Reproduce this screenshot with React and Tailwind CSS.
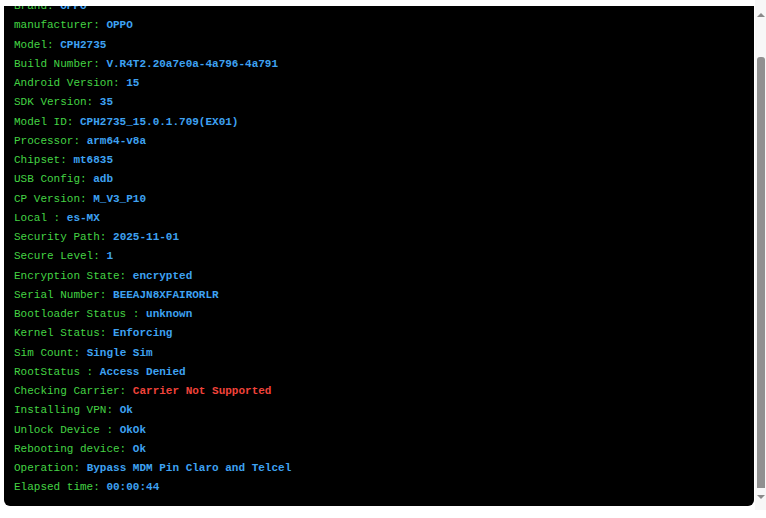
import React from 'react';

const lines = [
  ['Brand: ', 'OPPO'],
  ['manufacturer: ', 'OPPO'],
  ['Model: ', 'CPH2735'],
  ['Build Number: ', 'V.R4T2.20a7e0a-4a796-4a791'],
  ['Android Version: ', '15'],
  ['SDK Version: ', '35'],
  ['Model ID: ', 'CPH2735_15.0.1.709(EX01)'],
  ['Processor: ', 'arm64-v8a'],
  ['Chipset: ', 'mt6835'],
  ['USB Config: ', 'adb'],
  ['CP Version: ', 'M_V3_P10'],
  ['Local : ', 'es-MX'],
  ['Security Path: ', '2025-11-01'],
  ['Secure Level: ', '1'],
  ['Encryption State: ', 'encrypted'],
  ['Serial Number: ', 'BEEAJN8XFAIRORLR'],
  ['Bootloader Status : ', 'unknown'],
  ['Kernel Status: ', 'Enforcing'],
  ['Sim Count: ', 'Single Sim'],
  ['RootStatus : ', 'Access Denied'],
  ['Checking Carrier: ', 'Carrier Not Supported', true],
  ['Installing VPN: ', 'Ok'],
  ['Unlock Device : ', 'OkOk'],
  ['Rebooting device: ', 'Ok'],
  ['Operation: ', 'Bypass MDM Pin Claro and Telcel'],
  ['Elapsed time: ', '00:00:44'],
];

function LogLine({ label, value, error }) {
  return (
    <div className="whitespace-pre">
      <span className="text-[#44d444]">{label}</span>
      <span className={error ? 'text-[#f0433a] font-bold' : 'text-[#3ea2f2] font-bold'}>{value}</span>
    </div>
  );
}

// scrollbar drawn by hand so it looks the same everywhere
function Scrollbar() {
  return (
    <div className="w-[11px] h-[510px] bg-[#f7f7f7] flex flex-col items-center">
      <div className="mt-[13px] w-0 h-0 border-l-[4px] border-r-[4px] border-b-[4px] border-l-transparent border-r-transparent border-b-[#8a8a8a]" />
      <div className="mt-[40px] w-[8px] ml-[1px] h-[431px] bg-[#909090] rounded-t-[3px]" />
      <div className="mt-[7px] w-0 h-0 border-l-[4px] border-r-[4px] border-t-[4px] border-l-transparent border-r-transparent border-t-[#8a8a8a]" />
    </div>
  );
}

export default function App() {
  return (
    <div className="w-[766px] h-[518px] bg-white flex pl-[4px] overflow-hidden">
      <div className="mt-[6px] w-[751px] h-[500px] bg-black rounded-b-[6px] overflow-hidden pl-[10px]">
        <div
          className="mt-[-9px] text-[11px] leading-[19.25px]"
          style={{ fontFamily: '"Liberation Mono", "DejaVu Sans Mono", monospace' }}
        >
          {lines.map(([label, value, error]) => (
            <LogLine key={label} label={label} value={value} error={error} />
          ))}
        </div>
      </div>
      <div className="ml-[1px]">
        <Scrollbar />
      </div>
    </div>
  );
}
